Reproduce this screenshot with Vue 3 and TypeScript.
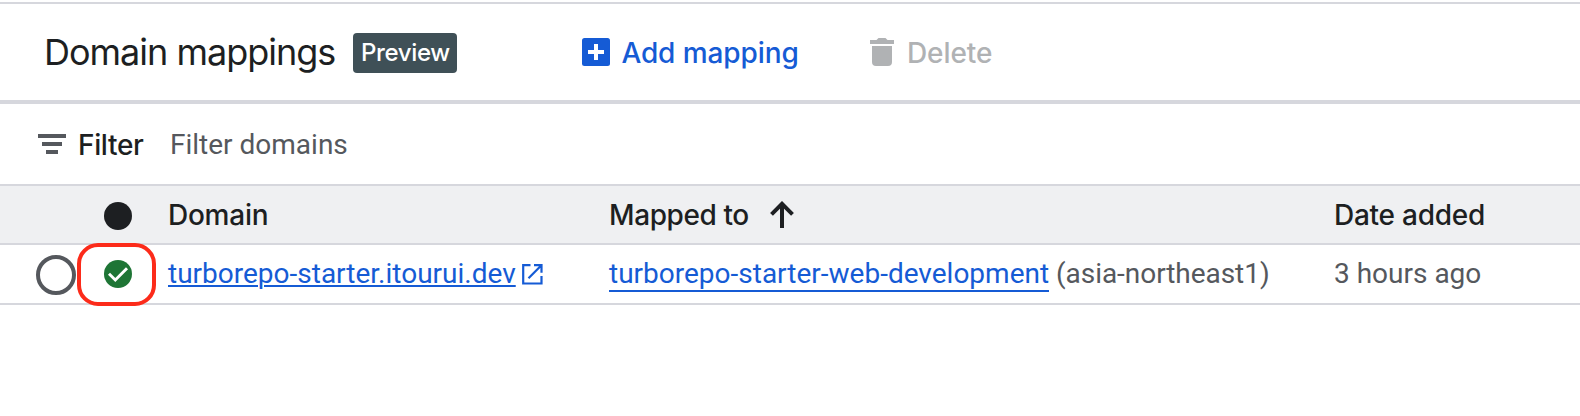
<script setup lang="ts">
interface Mapping {
  domain: string
  service: string
  region: string
  added: string
}

const mappings: Mapping[] = [
  {
    domain: 'turborepo-starter.itourui.dev',
    service: 'turborepo-starter-web-development',
    region: 'asia-northeast1',
    added: '3 hours ago',
  },
]
</script>

<template>
  <main class="page">
    <header class="toolbar">
      <h1 class="title">Domain mappings</h1>
      <span class="badge">Preview</span>
      <button class="action add" type="button">
        <svg width="28" height="28" viewBox="0 0 28 28">
          <rect width="28" height="28" rx="2.5" fill="currentColor" />
          <path d="M14 6v16M6 14h16" stroke="#fff" stroke-width="4" />
        </svg>
        <span>Add mapping</span>
      </button>
      <button class="action delete" type="button" disabled>
        <svg width="24" height="28" viewBox="0 0 24 28">
          <path
            fill="currentColor"
            d="M0 2h6.5L8.500 0h7L17.500 2H24v4H0zM2 8h20v16a4 4 0 0 1-4 4H6a4 4 0 0 1-4-4z"
          />
        </svg>
        <span>Delete</span>
      </button>
    </header>

    <div class="filter">
      <svg width="28" height="20" viewBox="0 0 28 20">
        <path fill="currentColor" d="M0 0h28v4H0zM4 8h20v4H4zM8 16h12v4H8z" />
      </svg>
      <span class="filter-label">Filter</span>
      <span class="filter-hint">Filter domains</span>
    </div>

    <div class="row head">
      <div class="status"><span class="dot"></span></div>
      <div><span class="tight">Domain</span></div>
      <div class="sorted">
        <span>Mapped to</span>
        <svg width="24" height="27" viewBox="0 0 24 27">
          <path d="M12 27V3M1.500 13.300L12 2.800l10.500 10.500" fill="none" stroke="currentColor" stroke-width="4" />
        </svg>
      </div>
      <div><span class="tight">Date added</span></div>
    </div>

    <div v-for="m in mappings" :key="m.domain" class="row body">
      <div class="status">
        <span class="radio"></span>
        <span class="check">
          <svg width="28" height="28" viewBox="0 0 28 28">
            <circle cx="14" cy="14" r="14" fill="#1e7535" />
            <path d="M5 13.800l6.300 6.200L23 8.200" fill="none" stroke="#fff" stroke-width="2.900" />
          </svg>
          <span class="highlight"></span>
        </span>
      </div>
      <div class="cell domain">
        <a class="link underlined">{{ m.domain }}</a>
        <svg width="21" height="21" viewBox="0 0 21 21">
          <path
            d="M8.500 1.200H1.200v18.300h18.300V12M12 1.200h7.500v7.500M19.200 1.500L6.500 14.200"
            fill="none"
            stroke="currentColor"
            stroke-width="2.200"
          />
        </svg>
      </div>
      <div class="cell"><a class="link bordered">{{ m.service }}</a> <span class="region">({{ m.region }})</span></div>
      <div class="cell">{{ m.added }}</div>
    </div>
  </main>
</template>

<style>
body {
  margin: 0;
  background: #fff;
}
</style>

<style scoped>
.page {
  box-sizing: border-box;
  height: 416px;
  padding-top: 2px;
  overflow: hidden;
  background: #fff;
  color: #1d1f22;
  font-family: Inter, 'Liberation Sans', sans-serif;
  font-size: 28px;
  white-space: nowrap;
}

svg {
  display: block;
  flex: none;
}

.toolbar {
  display: flex;
  align-items: center;
  height: 96px;
  padding-left: 44px;
  border-top: 2px solid #d6d7dd;
  border-bottom: 4px solid #d6d7dd;
}

.title {
  width: 309px;
  margin: 0;
  font-size: 36px;
  font-weight: 400;
  letter-spacing: -1px;
}

.badge {
  box-sizing: border-box;
  width: 104px;
  height: 40px;
  margin-top: 2px;
  padding-left: 8px;
  border-radius: 4px;
  background: #3f5057;
  color: #fff;
  font-size: 24px;
  font-weight: 500;
  line-height: 39px;
  letter-spacing: -0.35px;
}

.action {
  display: flex;
  align-items: center;
  gap: 11px;
  padding: 0;
  border: 0;
  background: none;
  font: inherit;
  font-weight: 500;
}

.action span {
  padding-top: 1px;
}

.add {
  margin-left: 125px;
  color: #155bd5;
}

.add span {
  width: 178px;
  letter-spacing: -0.1px;
}

.delete {
  margin-left: 71px;
  color: #b0b2b4;
}

.delete span {
  margin-left: 2px;
  letter-spacing: -0.1px;
}

.filter {
  display: flex;
  align-items: center;
  height: 80px;
  padding-left: 38px;
  color: #55585d;
}

.filter-label {
  width: 92px;
  margin-left: 12px;
  padding-top: 1px;
  color: #1d1f22;
  font-weight: 500;
  letter-spacing: -0.35px;
}

.filter-hint {
  font-family: Roboto, sans-serif;
}

.row {
  display: grid;
  grid-template-columns: 168px 441px 725px 1fr;
  align-items: center;
}

.head {
  height: 57px;
  border-top: 2px solid #d6d7dd;
  border-bottom: 2px solid #d6d7dd;
  background: #eff0f2;
  font-weight: 500;
}

.head .tight {
  letter-spacing: -0.25px;
}

.sorted {
  display: flex;
  align-items: center;
}

.sorted span {
  width: 161px;
  letter-spacing: -0.4px;
}

.dot {
  width: 28px;
  height: 28px;
  margin: 3px 0 0 104px;
  border-radius: 50%;
  background: #1d1f22;
}

.body {
  height: 58px;
  border-bottom: 2px solid #d6d7dd;
  color: #55585d;
  font-family: Roboto, sans-serif;
}

.cell {
  padding-bottom: 2px;
}

.status {
  display: flex;
  align-items: center;
}

.radio {
  box-sizing: border-box;
  width: 40px;
  height: 40px;
  margin: 2px 28px 0 36px;
  border: 4px solid #55585d;
  border-radius: 50%;
}

.check {
  position: relative;
}

.highlight {
  position: absolute;
  box-sizing: border-box;
  top: -17px;
  left: -27px;
  width: 79px;
  height: 63px;
  border: 4px solid #fc2b1a;
  border-radius: 21px;
}

.domain {
  display: flex;
  align-items: center;
  gap: 6px;
  color: #155bd5;
}

.domain svg {
  margin-top: 2px;
}

.link {
  color: #155bd5;
}

.region {
  letter-spacing: -0.05px;
}

.underlined {
  text-decoration: underline;
  text-decoration-thickness: 2px;
  text-underline-offset: 2px;
}

.bordered {
  border-bottom: 2px solid #155bd5;
}
</style>
